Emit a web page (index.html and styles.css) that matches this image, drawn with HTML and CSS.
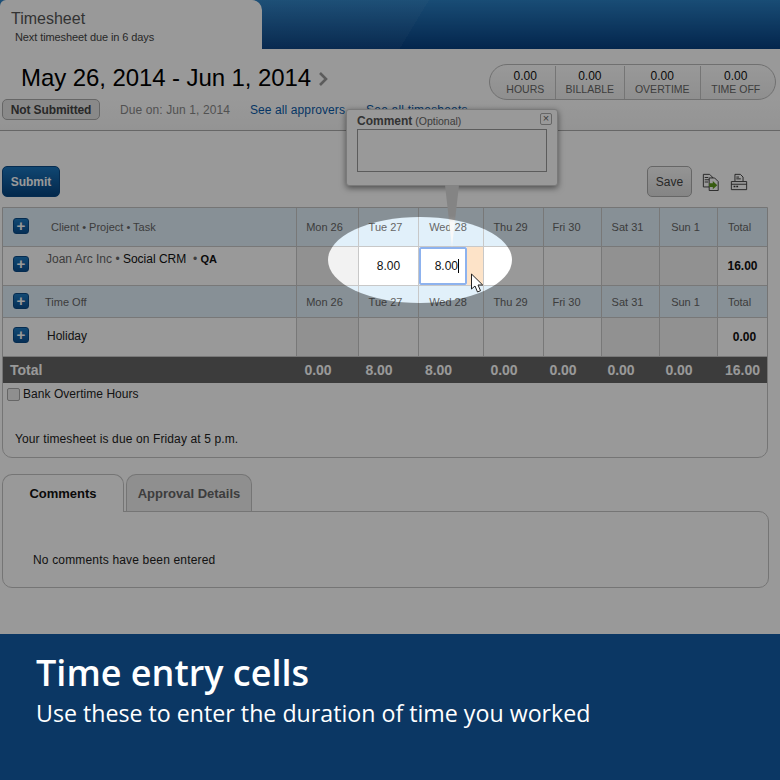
FILE: index.html
```html
<!DOCTYPE html>
<html lang="en">

<head>
    <meta charset="utf-8">
    <meta name="viewport" content="width=device-width, initial-scale=1.0">
    <title>Timesheet</title>
    <link rel="stylesheet" href="styles.css">
</head>

<body>
    <div class="side">
        <header class="topbar">
            <div class="tab">
                <h1>Timesheet</h1>
                <p>Next timesheet due in 6 days</p>
            </div>
        </header>

        <section class="datebar">
            <h2>May 26, 2014 - Jun 1, 2014
                <svg class="next" width="10" height="16" viewBox="0 0 10 16">
                    <path d="M2 2l6 6-6 6" fill="none" stroke="#999" stroke-width="2.6" />
                </svg>
            </h2>
            <div class="summary">
                <div class="sum"><b>0.00</b><span>HOURS</span></div>
                <div class="sum"><b>0.00</b><span>BILLABLE</span></div>
                <div class="sum"><b>0.00</b><span>OVERTIME</span></div>
                <div class="sum"><b>0.00</b><span>TIME OFF</span></div>
            </div>
        </section>

        <section class="status">
            <span class="badge">Not Submitted</span>
            <span class="due">Due on: Jun 1, 2014</span>
            <a class="approvers">See all approvers</a>
            <a class="sheets">See all timesheets</a>
        </section>

        <section class="actions">
            <button class="submit">Submit</button>
            <button class="save">Save</button>
            <svg class="icon-export" width="18" height="18" viewBox="0 0 20 20">
                <path d="M1.500 1.500h7l3 3v11h-10z" fill="#fff" stroke="#333" />
                <path d="M8 5.500h6l4 4v10h-10z" fill="#fff" stroke="#333" />
                <path d="M3 5h4M3 7.500h5M3 10h4" stroke="#333" />
                <path d="M8 11.500h4v-2.500l5 4.500-5 4.500v-2.500h-4z" fill="#5c9a1c" />
            </svg>
            <svg class="icon-print" width="18" height="18" viewBox="0 0 20 20">
                <path d="M5.500 9v-7.500h6l3 3v4.500" fill="#fff" stroke="#333" />
                <path d="M7 4.500h3M7 6.500h5" stroke="#333" />
                <path d="M1.500 9.500h17v9h-17z" fill="#fff" stroke="#333" />
                <path d="M1.500 12.500h17" stroke="#333" />
                <path d="M4 15h2M7 15h2" stroke="#333" stroke-width="1.500" />
            </svg>
        </section>

        <section class="sheet">
            <table>
                <colgroup>
                    <col class="c-name">
                    <col class="c-mon">
                    <col class="c-tue">
                    <col class="c-wed">
                    <col class="c-thu">
                    <col class="c-day">
                    <col class="c-day">
                    <col class="c-day">
                    <col class="c-tot">
                </colgroup>
                <tr class="head head-tall">
                    <td>
                        <div class="name name-task"><span class="plus">+</span><span>Client • Project • Task</span></div>
                    </td>
                    <td>Mon 26</td>
                    <td>Tue 27</td>
                    <td>Wed 28</td>
                    <td>Thu 29</td>
                    <td>Fri 30</td>
                    <td>Sat 31</td>
                    <td>Sun 1</td>
                    <td>Total</td>
                </tr>
                <tr class="row">
                    <td>
                        <div class="name name-client"><span class="plus">+</span>
                            <span class="client">Joan Arc Inc <i>•</i> <em>Social CRM</em>&nbsp; <i>•</i> <strong>QA</strong></span>
                        </div>
                    </td>
                    <td class="off"></td>
                    <td class="num">8.00</td>
                    <td class="entry">
                        <div class="entry-wrap">
                            <div class="input">8.00<span class="caret"></span></div>
                            <div class="changed"></div>
                        </div>
                        <svg class="cursor" width="14" height="21" viewBox="0 0 14 21">
                            <path d="M1.500 1v15l3.500-3 2.500 6 3-1.300-2.500-5.700h4.700z" fill="#fff" stroke="#222" />
                        </svg>
                    </td>
                    <td></td>
                    <td></td>
                    <td class="off"></td>
                    <td class="off"></td>
                    <td class="rowtotal">16.00</td>
                </tr>
                <tr class="head">
                    <td>
                        <div class="name name-off"><span class="plus">+</span><span>Time Off</span></div>
                    </td>
                    <td>Mon 26</td>
                    <td>Tue 27</td>
                    <td>Wed 28</td>
                    <td>Thu 29</td>
                    <td>Fri 30</td>
                    <td>Sat 31</td>
                    <td>Sun 1</td>
                    <td>Total</td>
                </tr>
                <tr class="row">
                    <td>
                        <div class="name name-holiday"><span class="plus">+</span><span class="holiday">Holiday</span></div>
                    </td>
                    <td class="off"></td>
                    <td></td>
                    <td></td>
                    <td></td>
                    <td></td>
                    <td class="off"></td>
                    <td class="off"></td>
                    <td class="rowtotal rowtotal-end">0.00</td>
                </tr>
                <tr class="totals">
                    <td>Total</td>
                    <td>0.00</td>
                    <td>8.00</td>
                    <td>8.00</td>
                    <td>0.00</td>
                    <td>0.00</td>
                    <td>0.00</td>
                    <td>0.00</td>
                    <td>16.00</td>
                </tr>
            </table>
            <label class="bank"><span class="check"></span>Bank Overtime Hours</label>
            <p class="duenote">Your timesheet is due on Friday at 5 p.m.</p>
        </section>

        <nav class="tabs">
            <span class="tabbtn active">Comments</span>
            <span class="tabbtn">Approval Details</span>
        </nav>
        <section class="panel">
            <p>No comments have been entered</p>
        </section>

        <div class="popup">
            <div class="popup-title"><b>Comment</b> (Optional)<span class="close">×</span></div>
            <div class="popup-text"></div>
            <div class="popup-arrow"></div>
        </div>

        <div class="dim">
            <div class="spot"></div>
        </div>
    </div>

    <footer class="caption">
        <h3>Time entry cells</h3>
        <p>Use these to enter the duration of time you worked</p>
    </footer>
</body>

</html>
```

FILE: styles.css
```css
* {
    box-sizing: border-box;
}

body {
    margin: 0;
    background-color: white;
    font-family: "Liberation Sans", Arial, sans-serif;
    font-size: 12px;
    color: #222;
}

.side {
    position: relative;
    height: 634px;
    overflow: hidden;
}

/* top */
.topbar {
    height: 49px;
    background:
        linear-gradient(121deg, rgba(255, 255, 255, 0.04) 53%, transparent 53%),
        linear-gradient(#2a80c4, #063f80);
}

.tab {
    width: 262px;
    height: 49px;
    padding: 10px 11px 0;
    background-color: white;
    border-radius: 6px 10px 0 0;
}

.tab h1 {
    margin: 0;
    font-size: 16px;
    font-weight: 400;
    line-height: 18px;
    color: #555;
}

.tab p {
    margin: 3px 0 0 4px;
    font-size: 11px;
    line-height: 13px;
    letter-spacing: -0.1px;
    color: #444;
}

.datebar {
    display: flex;
    justify-content: space-between;
    height: 50px;
    padding: 15px 4px 0 21px;
}

.datebar h2 {
    margin: 0;
    font-size: 24px;
    font-weight: 400;
    line-height: 28px;
    letter-spacing: -0.08px;
    color: #000;
}

.next {
    vertical-align: -1px;
}

.summary {
    display: flex;
    width: 287px;
    height: 36px;
    padding-top: 1px;
    border: 1px solid #bbb;
    border-radius: 18px;
    background: linear-gradient(#fff, #eee);
}

.sum {
    display: flex;
    flex-direction: column;
    align-items: center;
    justify-content: center;
    width: 70px;
    border-left: 1px solid #c4c4c4;
    line-height: 13px;
}

.sum:first-child {
    width: 65px;
    padding-left: 6px;
    border-left: none;
}

.sum:nth-child(3) {
    width: 76px;
}

.sum:last-child {
    width: 76px;
    padding-right: 4px;
}

.sum b {
    font-size: 12px;
    font-weight: 400;
    color: #111;
}

.sum span {
    font-size: 10.5px;
    color: #666;
}

.status {
    display: flex;
    align-items: flex-start;
    height: 32px;
    padding-left: 2px;
    border-bottom: 1px solid #aaa;
    background: linear-gradient(#fff, #f6f6f6);
    line-height: 22px;
}

.badge {
    width: 98px;
    height: 21px;
    border: 1px solid #aaa;
    border-radius: 5px;
    background-color: #e4e4e4;
    font-weight: 700;
    line-height: 20px;
    letter-spacing: -0.1px;
    text-align: center;
    color: #444;
}

.due {
    margin-left: 20px;
    letter-spacing: 0.1px;
    color: #888;
}

.approvers {
    margin-left: 20px;
    letter-spacing: 0.1px;
    color: #0b5ba8;
}

.sheets {
    margin-left: 21px;
    letter-spacing: 0.2px;
    color: #0b5ba8;
}

/* submit and save */
.actions {
    display: flex;
    align-items: center;
    height: 31px;
    margin: 35px 0 10px;
    padding: 0 32px 0 2px;
}

.actions button {
    height: 31px;
    border-radius: 5px;
    font-family: inherit;
    font-size: 12px;
}

.submit {
    width: 58px;
    border: 1px solid #0a4a86;
    background: linear-gradient(#1b76be, #06447f);
    font-weight: 700;
    color: white;
}

.save {
    width: 45px;
    margin-left: auto;
    border: 1px solid #aaa;
    background: linear-gradient(#f8f8f8, #ddd);
    color: #444;
}

.icon-export {
    margin-left: 10px;
}

.icon-print {
    margin-left: 10px;
}

/* table */
.sheet {
    width: 766px;
    height: 251px;
    margin-left: 2px;
    border: 1px solid #c4c4c4;
    border-radius: 0 0 10px 10px;
}

table {
    width: 764px;
    border-spacing: 0;
    table-layout: fixed;
}

.c-name {
    width: 294px;
}

.c-mon {
    width: 62px;
}

.c-tue {
    width: 60px;
}

.c-wed {
    width: 65px;
}

.c-thu {
    width: 60px;
}

.c-day {
    width: 58px;
}

.c-tot {
    width: 49px;
}

td {
    padding: 0;
    border-right: 1px solid #c8c8c8;
    border-bottom: 1px solid #c8c8c8;
    text-align: center;
}

td:last-child {
    border-right: none;
}

.head td {
    height: 32px;
    padding-right: 6px;
    background-color: #e1f0fa;
    font-size: 11px;
    color: #666;
}

.head td:first-child {
    padding-right: 0;
}

.head td:nth-child(6) {
    padding-right: 12px;
}

.head-tall td {
    height: 39px;
}

.head .plus {
    margin-top: -2px;
}

.row td {
    height: 39px;
    background-color: white;
    font-size: 12px;
}

.row td.off {
    background-color: #f2f2f2;
}

.row .num {
    color: #111;
}

.rowtotal {
    font-weight: 700;
    color: #111;
}

.rowtotal-end {
    padding-left: 4px;
}

.name {
    display: flex;
    align-items: center;
    padding-left: 10px;
    text-align: left;
}

.plus {
    width: 16px;
    height: 16px;
    border: 1px solid #0a4a86;
    border-radius: 3px;
    background: linear-gradient(#1f7cc2, #0a4f90);
    font-size: 15px;
    font-weight: 700;
    line-height: 13px;
    text-align: center;
    color: white;
}

.name-task span:last-child {
    margin-left: 22px;
}

.name-client {
    align-items: flex-start;
    padding-bottom: 4px;
}

.client {
    margin: -4px 0 0 17px;
    color: #666;
}

.client em {
    font-style: normal;
    color: #111;
}

.client i {
    font-style: normal;
}

.client strong {
    font-size: 11px;
    color: #111;
}

.name-off span:last-child {
    margin-left: 16px;
}

.name-holiday {
    padding-bottom: 4px;
}

.holiday {
    margin: 2px 0 0 18px;
    color: #222;
}

.entry {
    position: relative;
}

.entry-wrap {
    display: flex;
    height: 38px;
}

.input {
    width: 48px;
    padding-right: 6px;
    border: 2px solid #8db2ee;
    border-radius: 2px;
    line-height: 34px;
    text-align: right;
    color: #111;
}

.caret {
    display: inline-block;
    width: 1px;
    height: 14px;
    background-color: #000;
    vertical-align: -3px;
}

.changed {
    flex: 1;
    background-color: #fde3c8;
}

.cursor {
    position: absolute;
    top: 26px;
    left: 51px;
}

.totals td {
    height: 26px;
    padding-right: 20px;
    border: none;
    background-color: #646464;
    font-size: 14px;
    font-weight: 700;
    color: white;
}

.totals td:first-child {
    padding: 0 0 0 7px;
    text-align: left;
}

.totals td:nth-child(4) {
    padding-right: 26px;
}

.totals td:last-child {
    padding-right: 0;
}

.bank {
    display: flex;
    align-items: center;
    padding: 4px 0 0 4px;
    letter-spacing: 0.05px;
    color: #222;
}

.check {
    width: 13px;
    height: 13px;
    margin-right: 3px;
    border: 1px solid #aaa;
    border-radius: 2px;
    background-color: #eee;
}

.duenote {
    margin: 31px 0 0 12px;
    line-height: 14px;
    letter-spacing: 0.12px;
    color: #222;
}

/* comments */
.tabs {
    display: flex;
    gap: 2px;
    height: 38px;
    margin: 16px 0 0 2px;
}

.tabbtn {
    width: 126px;
    height: 37px;
    padding-top: 11px;
    border: 1px solid #c4c4c4;
    border-bottom: none;
    border-radius: 10px 10px 0 0;
    background-color: #eee;
    font-size: 13px;
    font-weight: 700;
    text-align: center;
    color: #666;
}

.active {
    position: relative;
    z-index: 1;
    width: 122px;
    height: 38px;
    background-color: white;
    color: #111;
}

.panel {
    width: 767px;
    height: 77px;
    margin: -1px 0 0 2px;
    padding: 41px 0 0 30px;
    border: 1px solid #c4c4c4;
    border-radius: 0 10px 10px 10px;
}

.panel p {
    margin: 0;
    line-height: 14px;
    letter-spacing: 0.17px;
    color: #222;
}

/* comment popup */
.popup {
    position: absolute;
    top: 109px;
    left: 346px;
    width: 212px;
    height: 77px;
    padding: 4px 10px 0;
    border: 1px solid #ccc;
    border-radius: 3px;
    background-color: white;
    box-shadow: 0 2px 6px rgba(0, 0, 0, 0.5);
    font-size: 10.5px;
    color: #666;
}

.popup-title {
    position: relative;
    height: 15px;
    line-height: 14px;
}

.popup-title b {
    font-size: 12px;
    color: #555;
}

.close {
    position: absolute;
    top: -1px;
    right: -5px;
    width: 12px;
    height: 12px;
    border: 1px solid #aaa;
    border-radius: 2px;
    font-size: 11px;
    line-height: 9px;
    text-align: center;
}

.popup-text {
    width: 190px;
    height: 43px;
    border: 1px solid #999;
}

.popup-arrow {
    position: absolute;
    top: 75px;
    left: 98px;
    width: 14px;
    height: 62px;
    background: linear-gradient(#dcdcdc 50%, #f8f8f8 60%);
    clip-path: polygon(0 0, 100% 0, 50% 100%);
}

/* dark layer with the hole */
.dim {
    position: absolute;
    z-index: 2;
    top: 0;
    left: 0;
    width: 100%;
    height: 100%;
    overflow: hidden;
}

.spot {
    position: absolute;
    top: 217px;
    left: 328px;
    width: 184px;
    height: 86px;
    border-radius: 50%;
    box-shadow: 0 0 0 1000px rgba(0, 0, 0, 0.4);
}

/* bottom text */
.caption {
    height: 146px;
    padding: 19px 36px 0;
    background-color: #0b3764;
    font-family: "Open Sans", sans-serif;
    color: white;
}

.caption h3 {
    margin: 0;
    font-size: 36px;
    font-weight: 600;
    line-height: 40px;
}

.caption p {
    margin: 0;
    font-size: 23.2px;
    line-height: 40px;
}
```
